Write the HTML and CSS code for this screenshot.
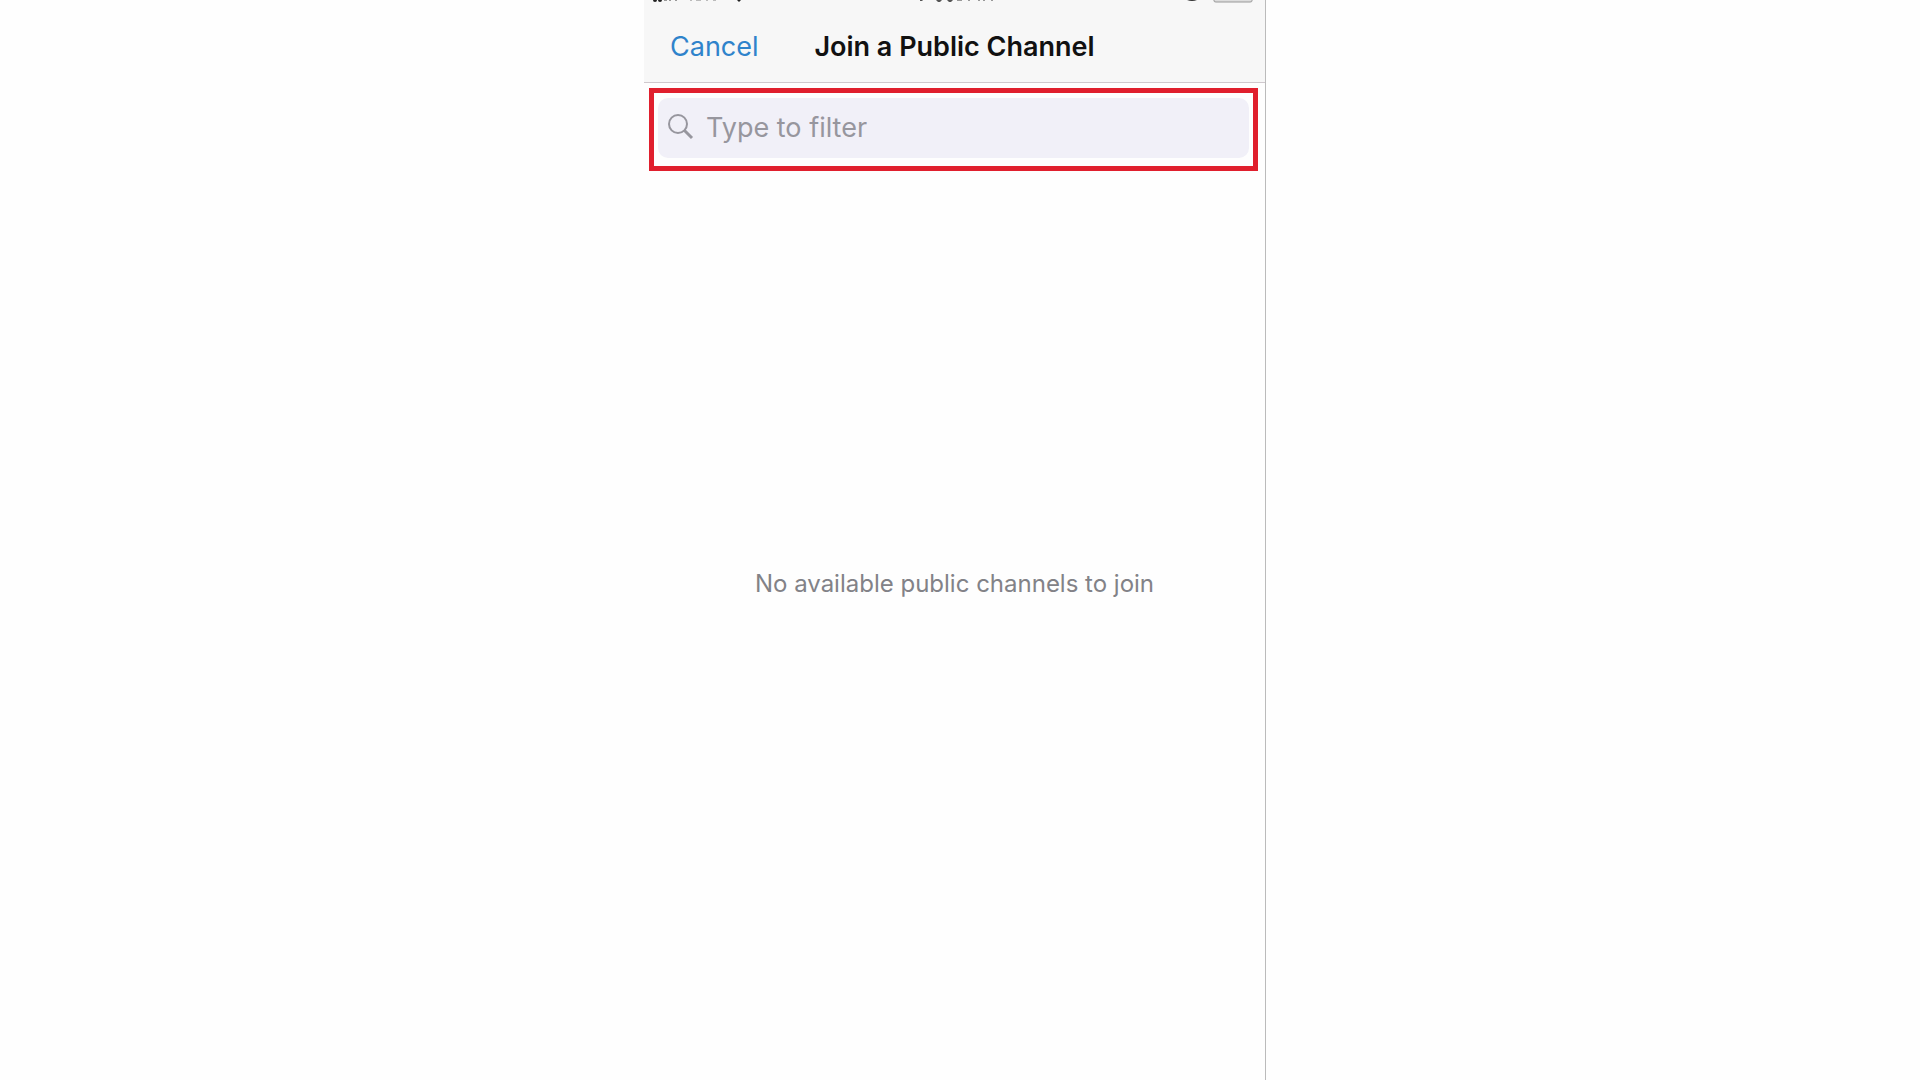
FILE: index.html
```html
<!DOCTYPE html>
<html lang="en">
<head>
  <meta charset="UTF-8" />
  <meta name="viewport" content="width=device-width, initial-scale=1.0"/>
  <title>Join a Public Channel</title>
  <link rel="stylesheet" href="styles.css">
</head>
<body>

  <main class="screen">
    <!-- bottom edge of the status bar -->
    <div class="status-bar" aria-hidden="true">
      <svg width="96" height="5" viewBox="0 0 96 5">
        <g fill="#222">
          <circle cx="3" cy="0" r="2" />
          <circle cx="8" cy="0" r="2" />
          <path d="M85 0h4l-2 2z" />
        </g>
        <g fill="#999">
          <path d="M12 0h3v1h-3zM17 0h2v1h-2zM23 0h2v1h-2z" />
        </g>
        <path d="M38 0h2v1h-2zM44 0h5v1h-5zM54 0h2v1h-2zM61 0h3v1h-3z" fill="#bbb" />
      </svg>
      <svg width="76" height="5" viewBox="0 0 76 5">
        <path d="M3 0h3l-1 1h-2zM19 0h6l-2 2h-2zM30 0h6l-2 2h-2z" fill="#555" />
        <path d="M40 0h5v1h-5zM51 0h2v1h-2zM61 0h2v1h-2zM66 0h2v1h-2zM74 0h2v1h-2z" fill="#999" />
      </svg>
      <svg width="96" height="5" viewBox="0 0 96 5">
        <path d="M26 0h10q-5 2-10 0z" fill="#333" />
        <path d="M53 0v1q0 1 2 1h34q2 0 2-1v-1" fill="#ddd" stroke="#999" />
      </svg>
    </div>

    <header class="nav-bar">
      <button type="button" class="cancel">Cancel</button>
      <h1 class="title">Join a Public Channel</h1>
    </header>

    <div class="highlight">
      <label class="search">
        <svg class="search-icon" width="26" height="26" viewBox="0 0 26 26" fill="none" stroke="#97969e" aria-hidden="true">
          <circle cx="10" cy="10" r="9" stroke-width="2" />
          <path d="M16 16l8 8" stroke-width="3" />
        </svg>
        <input type="text" class="search-input" placeholder="Type to filter" aria-label="Type to filter">
      </label>
    </div>

    <p class="empty">No available public channels to join</p>
  </main>

</body>
</html>
```

FILE: styles.css
```css
* {
  box-sizing: border-box;
}

body {
  margin: 0;
  padding-right: 10px;
  font-family: Inter, "Liberation Sans", sans-serif;
  background-color: #fefefe;
}

.screen {
  display: flex;
  flex-direction: column;
  max-width: 622px;
  min-height: 100vh;
  margin: 0 auto;
  border-right: 1px solid #bbb;
}

.status-bar {
  display: flex;
  justify-content: space-between;
  padding: 0 8px;
  background-color: #f7f7f7;
}

.status-bar svg {
  display: block;
}

.nav-bar {
  display: grid;
  grid-template-columns: 1fr auto 1fr;
  align-items: center;
  height: 78px;
  padding: 6px 26px 0;
  background-color: #f7f7f7;
  border-bottom: 1px solid #cfc8cd;
}

.cancel {
  justify-self: start;
  padding: 0;
  border: 0;
  background: none;
  color: #2f83cb;
  font-family: inherit;
  font-size: 27px;
  cursor: pointer;
}

.title {
  margin: 0;
  color: #111;
  font-size: 27px;
  font-weight: 600;
}

.highlight {
  margin: 5px 7px 0 5px;
  padding: 5px 4px 8px;
  border: 5px solid #e01f2d;
}

.search {
  display: flex;
  align-items: center;
  gap: 12px;
  height: 60px;
  padding: 0 12px 2px 10px;
  border-radius: 10px;
  background-color: #f1f0f8;
}

.search-input {
  flex: 1;
  min-width: 0;
  padding: 0;
  border: 0;
  outline: none;
  background: none;
  color: #111;
  font-family: inherit;
  font-size: 27px;
}

.search-input::placeholder {
  color: #97969e;
  opacity: 1;
}

.empty {
  flex: 1;
  display: flex;
  align-items: center;
  justify-content: center;
  margin: 0;
  padding-bottom: 84px;
  color: #828287;
  font-size: 24px;
}
```
